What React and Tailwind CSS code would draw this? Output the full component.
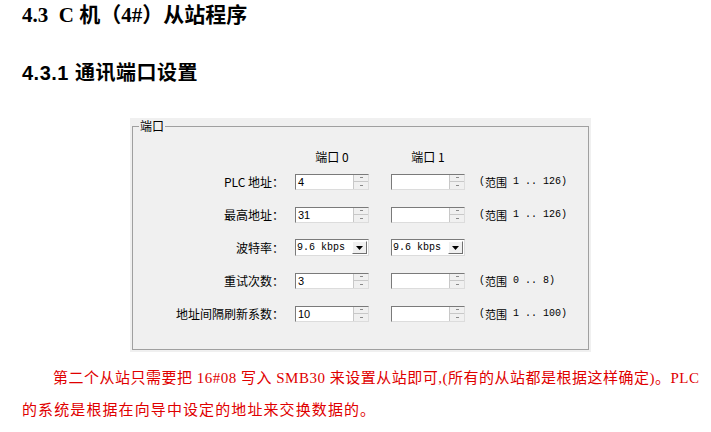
import React from "react";

const CJK = "font-['Noto_Sans_CJK_SC',sans-serif]";
const MONO = "font-['Liberation_Mono','Noto_Sans_CJK_SC',monospace]";

function Spin({ value }) {
  return (
    <div className="flex w-[74px] h-[16px] bg-white border border-t-[#7a7a7a] border-l-[#7a7a7a] border-b-[#dcdcdc] border-r-[#dcdcdc]">
      <div className="flex-1 pl-[2px] text-[11px] leading-[14px] text-black font-['Liberation_Sans',sans-serif]">{value}</div>
      <div className="w-[15px] flex flex-col">
        <div className="flex-1 bg-[#f0f0f0] border-l border-b border-[#c8c8c8] flex items-center justify-center">
          <div className="w-[3px] h-[1px] bg-[#8a8a8a]" />
        </div>
        <div className="flex-1 bg-[#f0f0f0] border-l border-[#c8c8c8] flex items-center justify-center">
          <div className="w-[3px] h-[1px] bg-[#8a8a8a]" />
        </div>
      </div>
    </div>
  );
}

function Drop() {
  return (
    <div className="flex w-[74px] h-[17px] bg-white border border-t-[#7a7a7a] border-l-[#7a7a7a] border-b-[#dcdcdc] border-r-[#dcdcdc]">
      <div className="flex-1 pl-[1px] text-[10px] leading-[15px] text-black font-['Liberation_Mono',monospace]">9.6 kbps</div>
      <div className="w-[15px] m-[1px] bg-[#f0f0f0] border border-t-white border-l-white border-b-[#707070] border-r-[#707070] flex items-center justify-center">
        <svg width="7" height="4" viewBox="0 0 7 4"><path d="M0 0h7L3.5 4z" fill="#000" /></svg>
      </div>
    </div>
  );
}

function Range({ a, b }) {
  return (
    <div className="ml-[14px] flex items-center text-black whitespace-pre">
      <span className={`text-[10px] leading-[14px] ${MONO}`}>(</span>
      <span className={`text-[11px] leading-[14px] ${CJK}`}>范围</span>
      <span className={`text-[10px] leading-[14px] ${MONO}`}>{` ${a} .. ${b})`}</span>
    </div>
  );
}

function Row({ label, children, range }) {
  return (
    <div className="flex items-center h-[33px]">
      <div className={`w-[151px] text-right text-[12px] leading-[14px] text-black ${CJK}`}>{label}</div>
      <div className="ml-[11px]">{children[0]}</div>
      <div className="ml-[22px]">{children[1]}</div>
      {range && <Range a={range[0]} b={range[1]} />}
    </div>
  );
}

export default function App() {
  return (
    <div className="relative w-[711px] h-[432px] bg-white overflow-hidden">
      <div className="pt-[3px] pl-[22px] text-[21px] leading-[24px] font-bold text-black font-['Liberation_Serif','Noto_Sans_CJK_SC',serif]">
        4.3&nbsp; C 机（4#）从站程序
      </div>
      <div className="mt-[34px] pl-[22px] text-[20px] leading-[24px] tracking-[0.5px] font-bold text-black font-['Liberation_Sans','Noto_Sans_CJK_SC',sans-serif]">
        4.3.1 通讯端口设置
      </div>
      <div className="mt-[33px] ml-[130px] w-[461px] h-[234px] bg-[#f0f0f0] pt-[8px] px-[2px]">
        <div className="relative h-[224px] border border-[#a0a0a0]">
          <div className={`absolute -top-[8px] left-[6px] px-[1px] bg-[#f0f0f0] text-[12px] leading-[14px] text-black ${CJK}`}>
            端口
          </div>
          <div className="mt-[22px] h-[16px] flex items-center">
            <div className={`ml-[162px] w-[74px] text-center text-[12px] leading-[14px] text-black ${CJK}`}>端口 0</div>
            <div className={`ml-[22px] w-[74px] text-center text-[12px] leading-[14px] text-black ${CJK}`}>端口 1</div>
          </div>
          <Row label="PLC 地址：" range={["1", "126"]}>
            <Spin value="4" />
            <Spin value="" />
          </Row>
          <Row label="最高地址：" range={["1", "126"]}>
            <Spin value="31" />
            <Spin value="" />
          </Row>
          <Row label="波特率：">
            <Drop />
            <Drop />
          </Row>
          <Row label="重试次数：" range={["0", "8"]}>
            <Spin value="3" />
            <Spin value="" />
          </Row>
          <Row label="地址间隔刷新系数：" range={["1", "100"]}>
            <Spin value="10" />
            <Spin value="" />
          </Row>
        </div>
      </div>
      <div className="mt-[10px] pl-[22px] pr-[4px] text-[15px] leading-[32px] text-[#e00000] whitespace-nowrap font-['Liberation_Serif','Noto_Sans_CJK_SC',serif]">
        <div className="pl-[31px] tracking-[0.5px]">第二个从站只需要把 16#08 写入 SMB30 来设置从站即可,(所有的从站都是根据这样确定)。PLC</div>
        <div className="tracking-[1.1px]">的系统是根据在向导中设定的地址来交换数据的。</div>
      </div>
    </div>
  );
}
